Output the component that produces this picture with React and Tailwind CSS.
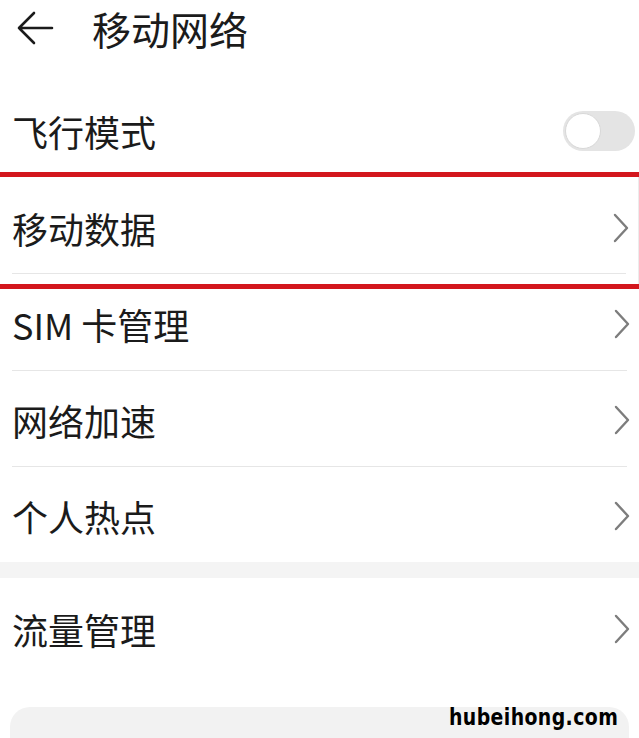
import React, { useState } from 'react';

const font = { fontFamily: '"Noto Sans CJK SC", "Noto Sans", sans-serif' };

const Chevron = () => (
  <svg width="18" height="30" viewBox="0 0 18 30" className="shrink-0">
    <path d="M3 2 L15 15 L3 28" fill="none" stroke="#7d7d7d" strokeWidth="2.4" strokeLinecap="round" strokeLinejoin="round" />
  </svg>
);

const Row = ({ label, className = '' }) => (
  <div className={`flex justify-between items-center pl-[12px] pr-[8px] ${className}`}>
    <span className="text-[36px] leading-none text-[#1b1b1b]">{label}</span>
    <Chevron />
  </div>
);

const Divider = () => <div className="mx-[12px] h-px bg-[#e6e6e6]"></div>;

const App = () => {
  const [airplane, setAirplane] = useState(false);

  return (
    <div className="relative w-[639px] h-[738px] bg-white overflow-hidden" style={font}>
      {/* header */}
      <div className="flex items-center h-[56px] pl-[16px]">
        <svg width="38" height="36" viewBox="0 0 38 36" className="shrink-0">
          <path d="M18 3 L3 18 L18 33 M3 18 L36 18" fill="none" stroke="#1b1b1b" strokeWidth="2.6" strokeLinecap="round" strokeLinejoin="round" />
        </svg>
        <h1 className="ml-[38px] text-[39px] leading-none text-[#1b1b1b] font-normal">移动网络</h1>
      </div>

      <div className="h-[27px]"></div>

      {/* airplane mode */}
      <div className="flex justify-between items-center h-[89px] pl-[12px] pr-[4px] pt-[6px]">
        <span className="text-[36px] leading-none text-[#1b1b1b]">飞行模式</span>
        <button
          onClick={() => setAirplane(!airplane)}
          className={`w-[72px] h-[40px] rounded-full p-[2px] flex items-center ${airplane ? 'bg-[#3478f6] justify-end' : 'bg-[#e4e4e4] justify-start'}`}
        >
          <span className="w-[36px] h-[36px] rounded-full bg-white border border-[#d8d8d8] block"></span>
        </button>
      </div>

      {/* highlighted row */}
      <div className="h-[5px] bg-[#d3161d]"></div>
      <div className="border-r border-[#ececec]">
        <Row label="移动数据" className="h-[96px] pt-[6px]" />
        <Divider />
        <div className="h-[10px]"></div>
      </div>
      <div className="h-[5px] bg-[#d3161d]"></div>

      <Row label="SIM 卡管理" className="h-[81px] pb-[12px]" />
      <Divider />
      <Row label="网络加速" className="h-[95px] pt-[3px]" />
      <Divider />
      <Row label="个人热点" className="h-[95px] pt-[3px]" />

      <div className="h-[16px] bg-[#f4f4f4]"></div>

      <Row label="流量管理" className="h-[102px]" />

      <div className="h-[27px]"></div>

      <div className="mx-[10px] h-[60px] rounded-[20px] bg-[#f2f2f2]"></div>

      <div
        className="absolute left-[449px] top-[700px] text-[23px] font-bold text-black tracking-[0.5px]"
        style={{ fontFamily: '"DejaVu Sans", sans-serif', transform: 'scaleX(0.82)', transformOrigin: 'left' }}
      >
        hubeihong.com
      </div>
    </div>
  );
};

export default App;
